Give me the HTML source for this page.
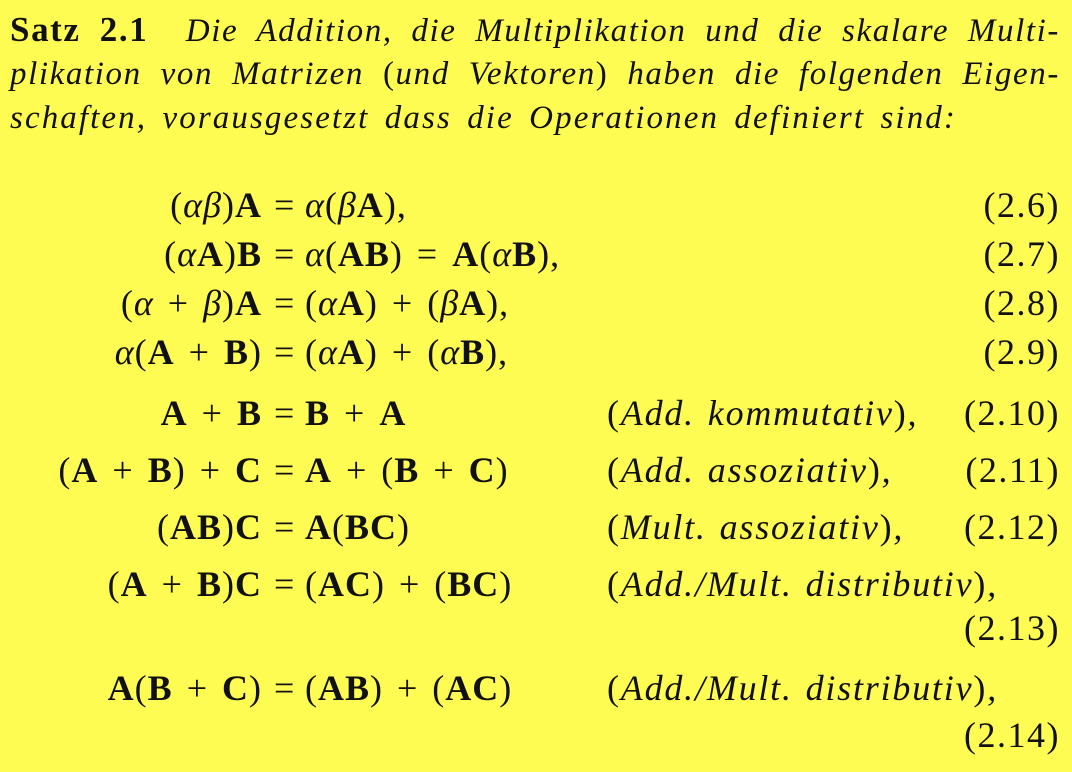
<!DOCTYPE html>
<html><head><meta charset="utf-8"><style>
body{margin:0;width:1072px;height:772px;background:#fefc52;font-family:"Liberation Serif",serif;color:#111;overflow:hidden;position:relative}
.l{position:absolute;left:10px;width:1050px;font-size:33px;letter-spacing:1.6px;font-style:italic;text-align:justify;text-align-last:justify;white-space:nowrap;line-height:40px}
.r{position:absolute;font-size:36px;letter-spacing:1px;word-spacing:4px;white-space:nowrap;line-height:40px}
.lhs{right:810px;text-align:right}
.eq{left:274px}
.rhs{left:305px}
.c{left:607px;font-style:italic;letter-spacing:1.8px;word-spacing:2px}
.n{right:12px;letter-spacing:1.5px}
b{font-weight:bold}
i{font-style:italic}
.up{font-style:normal}
</style></head><body>
<div class="l" style="top:10px"><b class="up" style="font-size:35px">Satz 2.1</b>&nbsp; Die Addition, die Multiplikation und die skalare Multi-</div>
<div class="l" style="top:54px">plikation von Matrizen <span class="up">(</span>und Vektoren<span class="up">)</span> haben die folgenden Eigen-</div>
<div class="l" style="top:98px;width:auto;text-align-last:auto;letter-spacing:2.1px;word-spacing:5px">schaften, vorausgesetzt dass die Operationen definiert sind:</div>

<div class="r lhs" style="top:185px">(<i>αβ</i>)<b>A</b></div><div class="r eq" style="top:185px">=</div><div class="r rhs" style="top:185px"><i>α</i>(<i>β</i><b>A</b>),</div><div class="r n" style="top:185px">(2.6)</div>
<div class="r lhs" style="top:234px">(<i>α</i><b>A</b>)<b>B</b></div><div class="r eq" style="top:234px">=</div><div class="r rhs" style="top:234px"><i>α</i>(<b>AB</b>) = <b>A</b>(<i>α</i><b>B</b>),</div><div class="r n" style="top:234px">(2.7)</div>
<div class="r lhs" style="top:283px">(<i>α</i> + <i>β</i>)<b>A</b></div><div class="r eq" style="top:283px">=</div><div class="r rhs" style="top:283px">(<i>α</i><b>A</b>) + (<i>β</i><b>A</b>),</div><div class="r n" style="top:283px">(2.8)</div>
<div class="r lhs" style="top:332px"><i>α</i>(<b>A</b> + <b>B</b>)</div><div class="r eq" style="top:332px">=</div><div class="r rhs" style="top:332px">(<i>α</i><b>A</b>) + (<i>α</i><b>B</b>),</div><div class="r n" style="top:332px">(2.9)</div>
<div class="r lhs" style="top:393px"><b>A</b> + <b>B</b></div><div class="r eq" style="top:393px">=</div><div class="r rhs" style="top:393px"><b>B</b> + <b>A</b></div><div class="r c" style="top:393px"><span class="up">(</span>Add. kommutativ<span class="up">)</span>,</div><div class="r n" style="top:393px">(2.10)</div>
<div class="r lhs" style="top:450px">(<b>A</b> + <b>B</b>) + <b>C</b></div><div class="r eq" style="top:450px">=</div><div class="r rhs" style="top:450px"><b>A</b> + (<b>B</b> + <b>C</b>)</div><div class="r c" style="top:450px"><span class="up">(</span>Add. assoziativ<span class="up">)</span>,</div><div class="r n" style="top:450px">(2.11)</div>
<div class="r lhs" style="top:507px">(<b>AB</b>)<b>C</b></div><div class="r eq" style="top:507px">=</div><div class="r rhs" style="top:507px"><b>A</b>(<b>BC</b>)</div><div class="r c" style="top:507px"><span class="up">(</span>Mult. assoziativ<span class="up">)</span>,</div><div class="r n" style="top:507px">(2.12)</div>
<div class="r lhs" style="top:564px">(<b>A</b> + <b>B</b>)<b>C</b></div><div class="r eq" style="top:564px">=</div><div class="r rhs" style="top:564px">(<b>AC</b>) + (<b>BC</b>)</div><div class="r c" style="top:564px"><span class="up">(</span>Add./Mult. distributiv<span class="up">)</span>,</div>
<div class="r n" style="top:608px">(2.13)</div>
<div class="r lhs" style="top:668px"><b>A</b>(<b>B</b> + <b>C</b>)</div><div class="r eq" style="top:668px">=</div><div class="r rhs" style="top:668px">(<b>AB</b>) + (<b>AC</b>)</div><div class="r c" style="top:668px"><span class="up">(</span>Add./Mult. distributiv<span class="up">)</span>,</div>
<div class="r n" style="top:715px">(2.14)</div>
</body></html>
